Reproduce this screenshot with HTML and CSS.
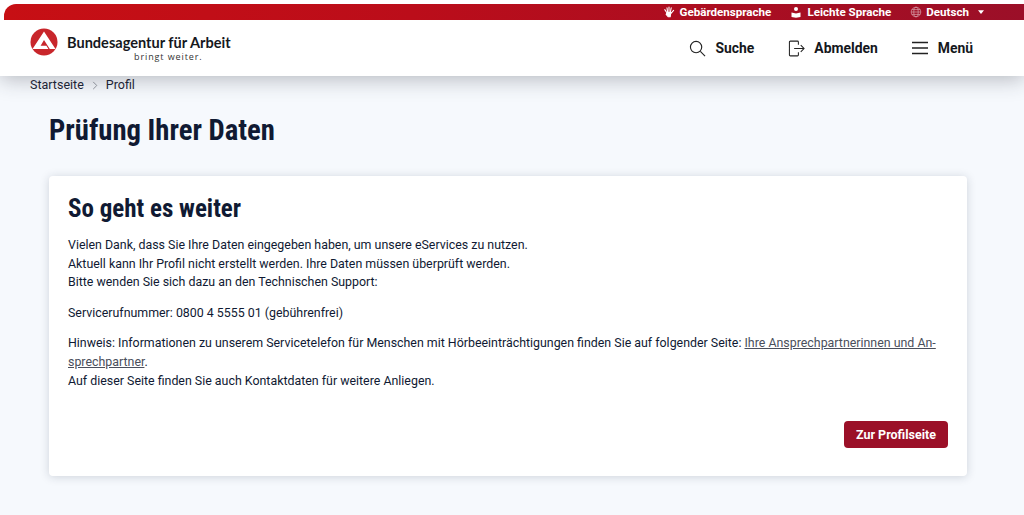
FILE: index.html
```html
<!DOCTYPE html>
<html lang="de">
<head>
<meta charset="utf-8">
<title>Prüfung Ihrer Daten</title>
<link rel="stylesheet" href="styles.css">
</head>
<body>
<header class="header">
  <div class="topbar">
    <a class="top-link"><svg class="top-icon" viewBox="0 0 12 12"><path d="M6 1v5M4 1.800l.6 4M8.200 1.800l-.8 4M1.800 3.600 4 7M10.600 4.400 8 7.400M4 6.500h3.800L7.200 10.800H5.200L3.200 8.500z" fill="#fff" stroke="#fff" stroke-width="1.100" stroke-linecap="round"/></svg>Gebärdensprache</a>
    <a class="top-link"><svg class="top-icon" viewBox="0 0 12 12"><circle cx="6" cy="3" r="2" fill="#fff"/><path d="M1.500 6.500 6 7.500l4.500-1V11L6 11.800 1.500 11z" fill="#fff"/></svg>Leichte Sprache</a>
    <a class="top-link top-lang"><svg class="top-icon" viewBox="0 0 12 12" fill="none" stroke="#d9a0aa" stroke-width=".7"><circle cx="6" cy="6" r="4.800"/><ellipse cx="6" cy="6" rx="2.200" ry="4.800"/><path d="M1.200 6h9.600M1.800 3.600h8.400M1.800 8.400h8.400"/></svg>Deutsch<svg class="caret" viewBox="0 0 8 5"><path d="M0 0h8L4 5z" fill="#fff"/></svg></a>
  </div>
  <div class="mainbar">
    <div class="brand">
      <svg class="logo" viewBox="0 0 28 28"><circle cx="14" cy="14" r="13.500" fill="#c8262b"/><path d="M14 3.500 25.500 21H19.800L14 12 10.600 17.800H16.400L18.400 21H2.500z" fill="#fff"/></svg>
      <div class="brand-text">
        <span class="brand-name">Bundesagentur für Arbeit</span>
        <span class="brand-claim">bringt weiter.</span>
      </div>
    </div>
    <nav class="nav">
      <a class="nav-item"><svg class="nav-icon" viewBox="0 0 18 18" fill="none" stroke="#222" stroke-width="1.200"><circle cx="7.500" cy="7.500" r="6"/><path d="m12 12 5 5"/></svg>Suche</a>
      <a class="nav-item"><svg class="nav-icon" viewBox="0 0 18 18" fill="none" stroke="#222" stroke-width="1.100"><path d="M11 5V2.200a1 1 0 0 0-1-1H2.500a1 1 0 0 0-1 1v13.600a1 1 0 0 0 1 1H10a1 1 0 0 0 1-1V13M6.500 9h10.500M13.500 5.500 17 9l-3.500 3.500"/></svg>Abmelden</a>
      <a class="nav-item"><svg class="nav-icon burger" viewBox="0 0 16 14" fill="none" stroke="#222" stroke-width="1.300"><path d="M0 1.500h16M0 7h16M0 12.500h16"/></svg>Menü</a>
    </nav>
  </div>
</header>
<div class="crumbs"><a>Startseite</a><svg class="chev" viewBox="0 0 6 10" fill="none" stroke="#8a8f98" stroke-width="1"><path d="m1 1 4 4-4 4"/></svg><a>Profil</a></div>
<main class="main">
  <h1 class="title">Prüfung Ihrer Daten</h1>
  <section class="card">
    <h2 class="card-title">So geht es weiter</h2>
    <p>Vielen Dank, dass Sie Ihre Daten eingegeben haben, um unsere eServices zu nutzen.<br>Aktuell kann Ihr Profil nicht erstellt werden. Ihre Daten müssen überprüft werden.<br>Bitte wenden Sie sich dazu an den Technischen Support:</p>
    <p>Servicerufnummer: 0800 4 5555 01 (gebührenfrei)</p>
    <p>Hinweis: Informationen zu unserem Servicetelefon für Menschen mit Hörbeeinträchtigungen finden Sie auf folgender Seite: <a class="link">Ihre Ansprechpartnerinnen und An-<br>sprechpartner</a>.<br>Auf dieser Seite finden Sie auch Kontaktdaten für weitere Anliegen.</p>
    <div class="actions"><a class="btn">Zur Profilseite</a></div>
  </section>
</main>
</body>
</html>
```
FILE: styles.css
```css
* { box-sizing: border-box; }
html, body { margin: 0; height: 515px; overflow: hidden; }
body {
  background: #f6f9fd;
  color: #101a33;
  font-family: Roboto, "Liberation Sans", sans-serif;
  font-size: 12.4px;
  line-height: 18.6px;
}
.header {
  background: #fff;
  padding-top: 4px;
  height: 76px;
  box-shadow: 0 3px 20px rgba(40, 45, 55, .32);
  position: relative;
}
.topbar {
  height: 16px;
  margin-left: 4px;
  border-radius: 12px 0 0 0;
  background: linear-gradient(90deg, #c70f14 0%, #bb0d1a 40%, #9b0f28 100%);
  display: flex;
  justify-content: flex-end;
  align-items: center;
  gap: 19px;
  padding-right: 40px;
  color: #fff;
  font-size: 11.6px;
  font-weight: 700;
}
.top-link { display: flex; align-items: center; gap: 5px; }
.top-icon { width: 12px; height: 12px; }
.top-lang { gap: 4px; }
.caret { width: 6px; height: 4px; margin-left: 5px; }
.mainbar {
  height: 56px;
  display: flex;
  justify-content: space-between;
  align-items: center;
  padding: 0 51px 0 30px;
}
.brand { display: flex; gap: 9px; align-items: flex-start; }
.logo { width: 28px; height: 28px; margin-top: -7px; }
.brand-text { display: flex; flex-direction: column; align-items: flex-end; }
.brand-name { font-family: Lato, sans-serif; font-size: 14.55px; font-weight: 700; line-height: 16px; color: #16181d; }
.brand-claim { font-family: "Open Sans", sans-serif; font-size: 9px; line-height: 11px; letter-spacing: .9px; margin-right: 28px; color: #333; }
.nav { display: flex; gap: 34px; }
.nav-item { display: flex; align-items: center; gap: 9px; font-size: 13.9px; font-weight: 700; color: #15181d; }
.nav-icon { width: 17px; height: 17px; }
.burger { width: 16px; height: 14px; margin-right: 1px; }
.crumbs { display: flex; align-items: center; gap: 8px; height: 18px; padding-left: 30px; font-size: 12.5px; color: #1c2436; }
.chev { width: 6px; height: 9px; }
.main { padding: 18px 57px 0 49px; }
.title { margin: 0 0 28px; font-size: 28.7px; line-height: 36px; font-weight: 700; font-stretch: 75%; color: #101a33; }
.card {
  background: #fff;
  border-radius: 4px;
  height: 300px;
  padding: 18px 19px;
  box-shadow: 0 1px 10px rgba(30, 40, 60, .18);
}
.card-title { margin: 0 0 12px; font-size: 25px; line-height: 30px; font-weight: 700; font-stretch: 75%; }
.card p { margin: 0 0 12px; }
.link { color: #4a4f5c; text-decoration: underline; }
.actions { display: flex; justify-content: flex-end; margin-top: 31px; }
.btn { background: #9b1028; color: #fff; font-weight: 700; font-size: 12.5px; height: 27px; line-height: 27px; padding: 0 12px; border-radius: 4px; }
```
